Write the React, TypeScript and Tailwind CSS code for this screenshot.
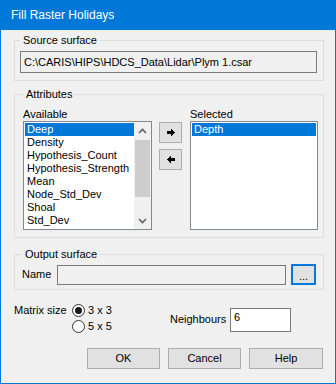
import { ReactNode } from "react";

const available = [
  "Deep",
  "Density",
  "Hypothesis_Count",
  "Hypothesis_Strength",
  "Mean",
  "Node_Std_Dev",
  "Shoal",
  "Std_Dev",
];

// Classic win32 group box
function GroupBox({ label, className, children }: { label: string; className: string; children: ReactNode }) {
  return (
    <fieldset className={`border border-[#dcdcdc] ${className}`}>
      <legend className="px-[3px] leading-[13px]">{label}</legend>
      {children}
    </fieldset>
  );
}

function ArrowIcon({ left }: { left?: boolean }) {
  return (
    <svg width="8" height="9" viewBox="0 0 8 9" shapeRendering="crispEdges" className={left ? "rotate-180" : ""}>
      <polygon points="0,3 4,3 4,0 8,4.5 4,9 4,6 0,6" fill="#000" />
    </svg>
  );
}

function Chevron({ down }: { down?: boolean }) {
  return (
    <svg width="9" height="6" viewBox="0 0 9 6" className={down ? "rotate-180" : ""}>
      <polyline points="1,5 4.5,1.5 8,5" fill="none" stroke="#606060" strokeWidth="1.6" />
    </svg>
  );
}

function Radio({ checked, label }: { checked?: boolean; label: string }) {
  return (
    <div className="h-[16px] flex items-center gap-[3px]">
      <span className="w-[13px] h-[13px] rounded-full border border-[#333] bg-white flex items-center justify-center">
        {checked && <span className="w-[7px] h-[7px] rounded-full bg-[#1a1a1a]" />}
      </span>
      <span>{label}</span>
    </div>
  );
}

function Button({ label, width }: { label: string; width: string }) {
  return (
    <button className={`${width} h-[21px] bg-[#e1e1e1] border border-[#adadad] text-center`}>{label}</button>
  );
}

export default function App() {
  return (
    <div className="w-[336px] h-[384px] border border-t-0 border-[#0078d7] bg-[#f0f0f0] flex flex-col text-[11px] leading-[13px] text-black font-['Liberation_Sans',Arial,sans-serif]">
      {/* Title bar */}
      <div className="h-[30px] bg-[#0078d7] text-white text-[12px] flex items-center pl-[11px] -mx-px">
        Fill Raster Holidays
      </div>

      <div className="flex flex-col pl-[13px] pr-[11px]">
        <GroupBox label="Source surface" className="mt-[4px] h-[47px] px-[5px]">
          <div className="mt-[4px] w-[297px] h-[22px] border border-[#7a7a7a] bg-[#f0f0f0] pl-[3px] flex items-center">
            C:\CARIS\HIPS\HDCS_Data\Lidar\Plym 1.csar
          </div>
        </GroupBox>

        <GroupBox label="Attributes" className="mt-[7px] h-[150px] pl-[8px] pr-[5px]">
          <div className="flex mt-[7px]">
            <div className="w-[129px]">
              <div>Available</div>
              <div className="h-[109px] border border-[#828790] bg-white flex">
                <div className="flex-1 pt-[1px] pl-[1px]">
                  {available.map((item, i) => (
                    <div key={item} className={`h-[13px] pl-[2px] ${i === 0 ? "bg-[#0078d7] text-white" : ""}`}>
                      {item}
                    </div>
                  ))}
                </div>
                <div className="w-[17px] bg-[#f0f0f0] flex flex-col items-center">
                  <div className="h-[17px] flex items-center justify-center">
                    <Chevron />
                  </div>
                  <div className="mt-[1px] w-[15px] h-[57px] bg-[#cdcdcd]" />
                  <div className="flex-1" />
                  <div className="h-[17px] flex items-center justify-center">
                    <Chevron down />
                  </div>
                </div>
              </div>
            </div>

            <div className="ml-[7px] mt-[14px] flex flex-col gap-[6px]">
              <button className="w-[23px] h-[21px] bg-[#e1e1e1] border border-[#adadad] flex items-center justify-center">
                <ArrowIcon />
              </button>
              <button className="w-[23px] h-[21px] bg-[#e1e1e1] border border-[#adadad] flex items-center justify-center">
                <ArrowIcon left />
              </button>
            </div>

            <div className="ml-[8px] w-[128px]">
              <div>Selected</div>
              <div className="h-[109px] border border-[#828790] bg-white p-[1px]">
                <div className="h-[13px] pl-[2px] bg-[#0078d7] text-white">Depth</div>
              </div>
            </div>
          </div>
        </GroupBox>

        <GroupBox label="Output surface" className="mt-[10px] h-[42px] pl-[7px] pr-[5px]">
          <div className="mt-[3px] flex items-center">
            <span className="w-[35px]">Name</span>
            <div className="w-[229px] h-[20px] border border-[#7a7a7a] bg-[#f0f0f0]" />
            <button className="ml-[5px] w-[25px] h-[21px] bg-[#e1e1e1] border-2 border-[#0078d7] flex items-center justify-center pt-[3px]">
              ...
            </button>
          </div>
        </GroupBox>

        <div className="flex mt-[12px]">
          <div className="w-[58px] h-[16px] flex items-center">Matrix size</div>
          <div className="w-[98px] flex flex-col">
            <Radio checked label="3 x 3" />
            <Radio label="5 x 5" />
          </div>
          <div className="mt-[3px] flex items-center">
            <span className="w-[60px]">Neighbours</span>
            <div className="w-[61px] h-[24px] border border-[#7a7a7a] bg-white pl-[3px] pt-[2px]">6</div>
          </div>
        </div>

        <div className="mt-[14px] flex justify-end gap-[8px] pr-[1px]">
          <Button label="OK" width="w-[73px]" />
          <Button label="Cancel" width="w-[73px]" />
          <Button label="Help" width="w-[74px]" />
        </div>
      </div>
    </div>
  );
}
